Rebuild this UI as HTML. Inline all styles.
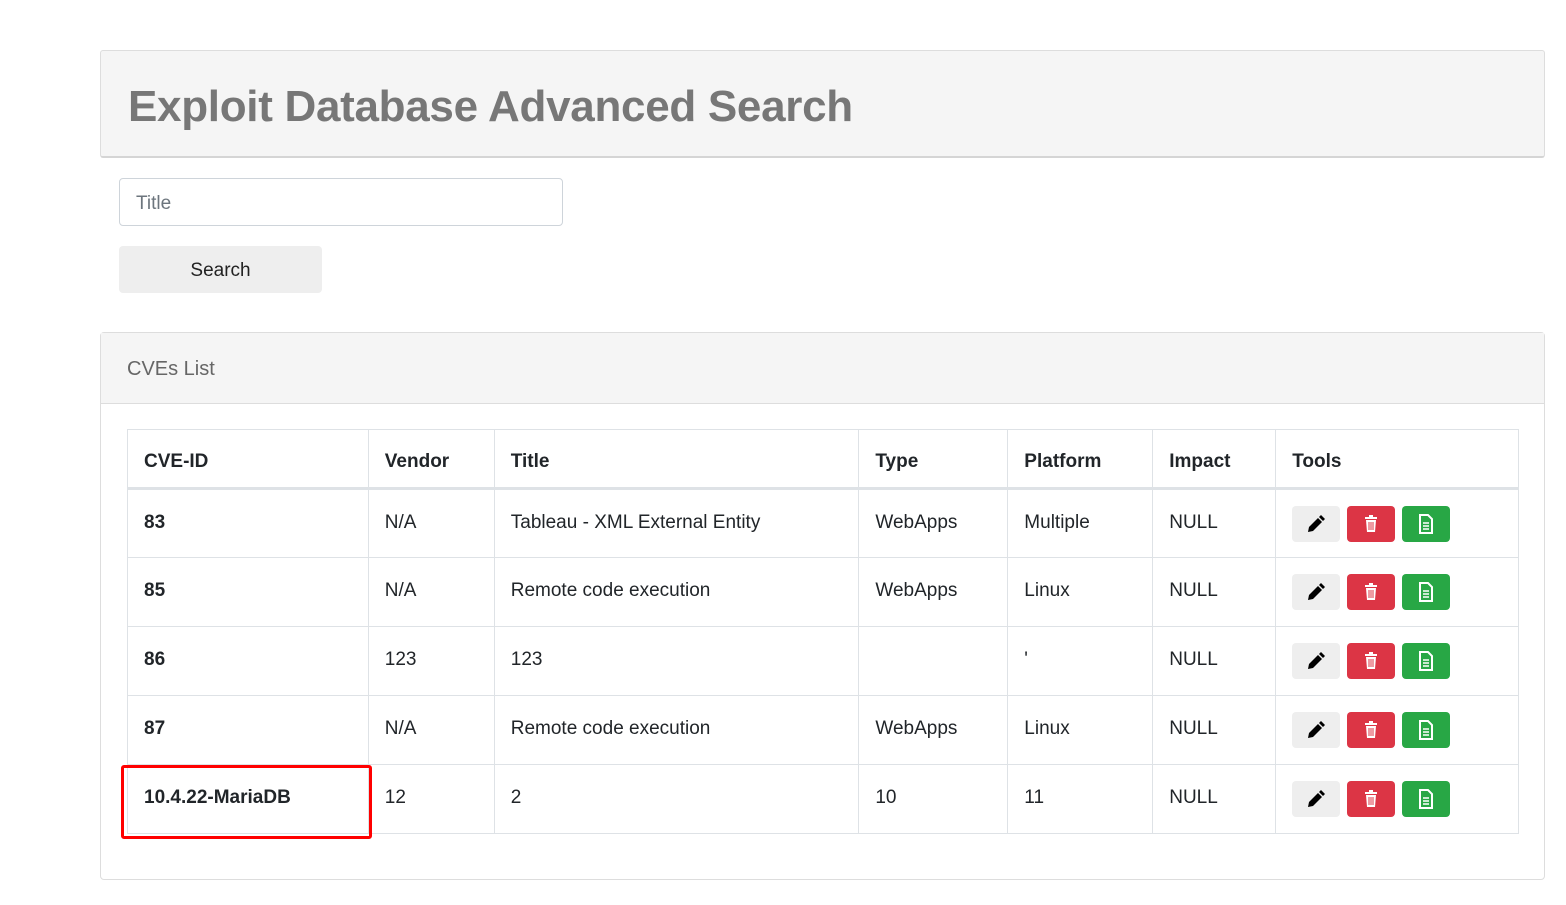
<!DOCTYPE html>
<html><head><style>
*{box-sizing:border-box;margin:0;padding:0}
body{width:1566px;height:905px;background:#fff;font-family:"Liberation Sans",sans-serif;color:#212529;position:relative;overflow:hidden}
.a{position:absolute}
.hdr{left:100px;top:50px;width:1445px;height:108px;background:#f5f5f5;border:1px solid #ddd;border-bottom:2px solid #d5d5d5;border-radius:3px}
.hdr h1{position:absolute;left:27px;top:31px;font-size:44px;color:#777;font-weight:bold;letter-spacing:-0.3px}
.inp{left:119px;top:178px;width:444px;height:48px;border:1px solid #ced4da;border-radius:4px;font-size:19px;color:#6c757d;padding:14px 16px}
.btn{left:119px;top:246px;width:203px;height:47px;background:#eee;border-radius:4px;font-size:19px;text-align:center;line-height:49px;color:#222}
.panel{left:100px;top:332px;width:1445px;height:548px;border:1px solid #ddd;border-radius:4px}
.ph{position:absolute;left:0;top:0;right:0;height:71px;background:#f5f5f5;border-bottom:1px solid #ddd;font-size:20px;color:#666;padding:25px 26px}
table{position:absolute;left:127px;top:429px;width:1392px;border-collapse:collapse;font-size:19px}
td,th{border:1px solid #dee2e6;padding:0 16px;text-align:left;vertical-align:top;height:69px;padding-top:22px}
th{height:59px;border-bottom:3px solid #dee2e6;padding-top:21px}
td.b{font-weight:bold}
.t{display:inline-block;width:48px;height:36px;border-radius:4px;margin-right:7px;vertical-align:top;margin-top:-6px;position:relative}
.e{background:#eee}.d{background:#dc3545}.g{background:#28a745}
.t svg{position:absolute;left:14px;top:8px}
.red{left:121px;top:765px;width:251px;height:74px;border:3px solid #f00;border-radius:3px}
</style></head><body>
<div class="a hdr"><h1>Exploit Database Advanced Search</h1></div>
<div class="a inp">Title</div>
<div class="a btn">Search</div>
<div class="a panel"><div class="ph">CVEs List</div></div>
<table>
<colgroup><col style="width:241px"><col style="width:126px"><col style="width:365px"><col style="width:149px"><col style="width:145px"><col style="width:123px"><col style="width:243px"></colgroup>
<tr><th>CVE-ID</th><th>Vendor</th><th>Title</th><th>Type</th><th>Platform</th><th>Impact</th><th>Tools</th></tr>
<tr><td class="b">83</td><td>N/A</td><td>Tableau - XML External Entity</td><td>WebApps</td><td>Multiple</td><td>NULL</td><td class="tl"></td></tr>
<tr><td class="b">85</td><td>N/A</td><td>Remote code execution</td><td>WebApps</td><td>Linux</td><td>NULL</td><td class="tl"></td></tr>
<tr><td class="b">86</td><td>123</td><td>123</td><td></td><td>'</td><td>NULL</td><td class="tl"></td></tr>
<tr><td class="b">87</td><td>N/A</td><td>Remote code execution</td><td>WebApps</td><td>Linux</td><td>NULL</td><td class="tl"></td></tr>
<tr><td class="b">10.4.22-MariaDB</td><td>12</td><td>2</td><td>10</td><td>11</td><td>NULL</td><td class="tl"></td></tr>
</table>
<div class="a red"></div>
<script>
var h='<span class="t e"><svg width="20" height="20" viewBox="0 0 20 20"><path d="M2 18l1-5 9-9 4 4-9 9z" fill="#000"/><path d="M13 3l2-2 4 4-2 2z" fill="#000"/></svg></span><span class="t d"><svg width="20" height="20" viewBox="0 0 20 20"><rect x="4" y="3" width="12" height="2" fill="#fff"/><rect x="8" y="1" width="4" height="2" fill="#fff"/><path d="M5 6h10l-1 12H6z" fill="#fff"/><path d="M8 8v8M10 8v8M12 8v8" stroke="#dc3545" stroke-width="1"/></svg></span><span class="t g"><svg width="20" height="20" viewBox="0 0 20 20"><path d="M4 1h8l4 4v14H4z" fill="none" stroke="#fff" stroke-width="2"/><path d="M7 9h6M7 12h6M7 15h6" stroke="#fff" stroke-width="1.6"/></svg></span>';
document.querySelectorAll('.tl').forEach(function(e){e.innerHTML=h});
</script>
</body></html>
